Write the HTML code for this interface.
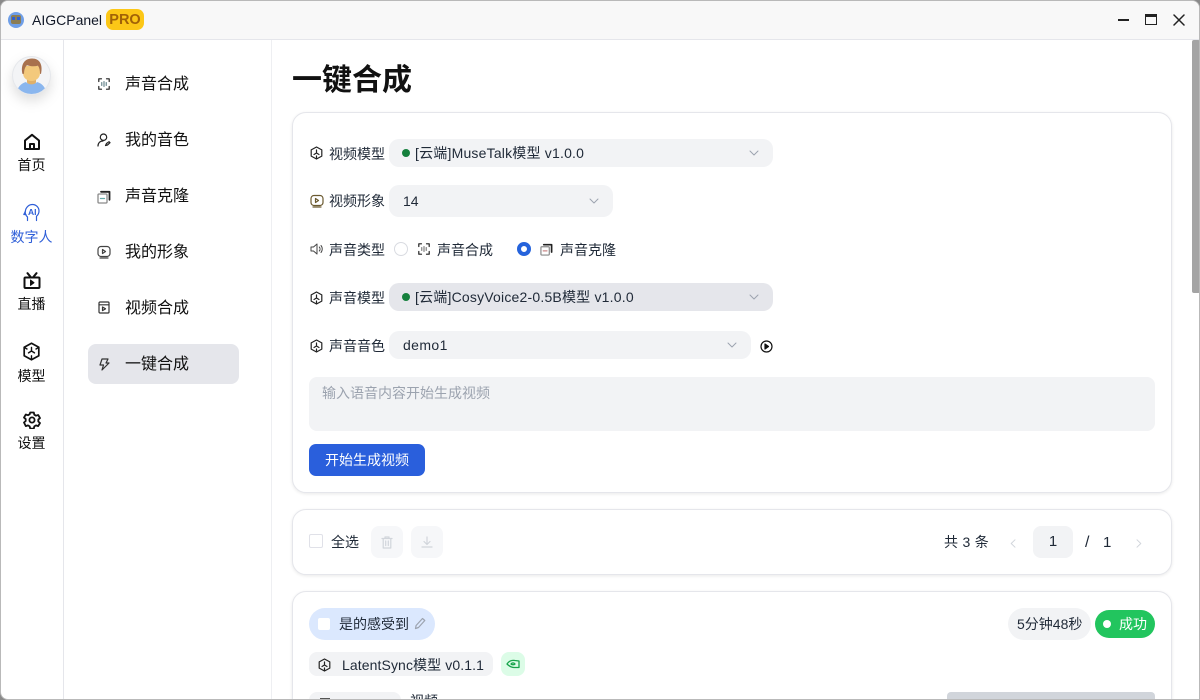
<!DOCTYPE html>
<html lang="zh-CN"><head><meta charset="utf-8"><title>AIGCPanel</title>
<style>
*{box-sizing:border-box;margin:0;padding:0}
html,body{width:1200px;height:700px;overflow:hidden;background:#8a8a8a}
body{font-family:"Liberation Sans","Noto Sans CJK SC",sans-serif;color:#111827}
#win{position:absolute;left:0;top:0;width:1200px;height:700px;background:#fff;border:1px solid #b9b9b9;border-radius:8px 8px 0 8px;overflow:hidden}
#root{position:absolute;left:-1px;top:-1px;width:1200px;height:700px}
.t{position:absolute;white-space:nowrap;line-height:20px}
.box{position:absolute}
svg.i{position:absolute;fill:none;stroke:currentColor;stroke-linecap:round;stroke-linejoin:round}
.sel{position:absolute;background:#f2f3f5;border-radius:10px;height:28px}
.card{position:absolute;left:292px;width:880px;background:#fff;border:1px solid #e5e6eb;border-radius:14px;box-shadow:0 1px 3px rgba(0,0,0,.09)}
.nav{font-size:14px;text-align:center;width:63px;left:0;color:#111}
.sub{font-size:16px;left:125px;color:#111}
.lab{font-size:14px;left:329px;color:#1f2937}
.v{font-size:14px;color:#1f2937}
.dot{position:absolute;width:8px;height:8px;border-radius:50%;background:#15803d}
</style></head><body>
<div id="win"><div id="root">

<!-- title bar -->
<div class="box" style="left:0;top:0;width:1200px;height:40px;background:#f8f8f8;border-bottom:1px solid #e5e6eb"></div>
<div class="box" style="left:8px;top:12px;width:16px;height:16px;border-radius:50%;background:#6f9fe8"></div>
<div class="box" style="left:11px;top:15px;width:10px;height:9px;border-radius:2px;background:#8b7d55"></div>
<div class="box" style="left:12px;top:17px;width:3px;height:3px;background:#2f5fd0"></div>
<div class="box" style="left:17px;top:17px;width:3px;height:3px;background:#2f5fd0"></div>
<div class="t" style="left:32px;top:10px;font-size:14px;width:72px;letter-spacing:0">AIGCPanel</div>
<div class="box" style="left:106px;top:9px;width:38px;height:21px;background:#fcc717;border-radius:7px"></div>
<div class="t" style="left:106px;top:10px;width:38px;text-align:center;font-size:14.500px;font-weight:700;color:#a16207">PRO</div>
<div class="box" style="left:1118px;top:19px;width:11px;height:1.500px;background:#222"></div>
<div class="box" style="left:1145px;top:14px;width:12px;height:11px;border:1.300px solid #222;border-top-width:3px"></div>
<svg class="i" style="left:1173px;top:14px;color:#222" width="12" height="12" viewBox="0 0 12 12" stroke-width="1.500"><path d="M1 1l10 10M11 1L1 11"/></svg>

<!-- left rail -->
<div class="box" style="left:63px;top:40px;width:1px;height:660px;background:#e5e6eb"></div>
<div class="box" style="left:271px;top:40px;width:1px;height:660px;background:#eeeff2"></div>

<!-- avatar -->
<svg style="left:12px;top:56px;filter:drop-shadow(0 6px 6px rgba(0,0,0,.13));position:absolute" width="40" height="40" viewBox="0 0 40 40">
<defs><clipPath id="c"><circle cx="19.500" cy="19.500" r="18.500"/></clipPath></defs>
<circle cx="19.500" cy="19.500" r="19.500" fill="#e5e7eb"/><circle cx="19.500" cy="19.500" r="18.500" fill="#f3f4f6"/>
<g clip-path="url(#c)">
<path d="M5 38c0-7 4-10.500 9-12 2 2.500 9 2.500 11 0 5 1.500 9 5 9 12z" fill="#8ab6ee"/>
<path d="M15 21h9v5.500c-1.500 2.500-7.500 2.500-9 0z" fill="#dfb06a"/>
<path d="M11 10h17v7c0 5-4 8-8.500 8S11 22 11 17z" fill="#f3c97c"/>
<path d="M10.500 18C8.500 10 11.500 2.500 20 2.500c8 0 11 6.500 9 15.500l-1-.3c0-3-.5-6-2-8-4 1-8 .5-11-.5-2 1.500-3 5-3 8.500z" fill="#a8714d"/>
</g></svg>

<!-- rail icons -->
<svg class="i" style="left:23px;top:133px;color:#111" width="18" height="18" viewBox="0 0 18 18" stroke-width="2"><path d="M2 7.500 9 1.800l7 5.700V16H2z"/><path d="M7 16v-5h4v5"/></svg>
<div class="t nav" style="top:155px">首页</div>
<svg class="i" style="left:23px;top:203px;color:#2f5fd8" width="18" height="19" viewBox="0 0 18 19" stroke-width="1.200"><path d="M4.500 17.500V14C2.800 12.500 2 10.500 2.300 8.300 2.800 4.300 5.800 1.500 9.500 1.500c3.700 0 6.500 3 6.500 6.500 0 2.200-1 4-2.500 5.200v4.300"/><path d="M2.300 8.500.8 11.500H3"/></svg>
<div class="t" style="left:28px;top:205px;font-size:8.500px;font-weight:700;color:#2f5fd8;line-height:14px">AI</div>
<div class="t nav" style="top:227px;color:#2f5fd8">数字人</div>
<svg class="i" style="left:23px;top:272px;color:#111" width="18" height="17" viewBox="0 0 18 17" stroke-width="2"><rect x="1.500" y="5.500" width="15" height="10.500" rx="1"/><path d="M4.500 1.200 7.500 4.800M13.500 1.200 10.500 4.800"/><path d="M7.500 8l3.500 2.700-3.500 2.700z" fill="currentColor" stroke-width="1"/></svg>
<div class="t nav" style="top:294px">直播</div>
<svg class="i" style="left:23px;top:342px;color:#111" width="17" height="19" viewBox="0 0 17 19" stroke-width="1.700"><path d="M8.500 1.200 15.800 5.200v8.600l-7.300 4-7.300-4V5.200z"/><path d="M8.500 5.500V9M8.500 9l-3 1.900M8.500 9l3 1.900M8.500 13.800v3.500M1.500 5.500l2.500 1.500M15.500 5.500l-2.500 1.500" stroke-width="1.400"/></svg>
<div class="t nav" style="top:366px">模型</div>
<svg class="i" style="left:23px;top:411px;color:#111" width="18" height="18" viewBox="0 0 18 18" stroke-width="1.800"><path d="M7.200 1.500h3.600l.5 2.200 1.700 1 2.200-.7 1.800 3.100-1.700 1.500v1.900l1.700 1.500-1.800 3.100-2.200-.7-1.700 1-.5 2.200H7.200l-.5-2.200-1.700-1-2.200.7L1 11.500l1.700-1.500V8.100L1 6.600l1.800-3.100 2.200.7 1.700-1z"/><circle cx="9" cy="9" r="2.600"/></svg>
<div class="t nav" style="top:433px">设置</div>

<!-- sub nav -->
<div class="box" style="left:88px;top:344px;width:151px;height:40px;background:#e5e6eb;border-radius:8px"></div>
<svg class="i" style="left:98px;top:78px;color:#222" width="12" height="12" viewBox="0 0 12 12" stroke-width="1.200" stroke-linecap="butt"><path d="M.8 3.500V.8h2.700M8.500.8h2.700v2.700M11.200 8.500v2.700H8.500M3.500 11.200H.8V8.500"/><path d="M3.800 4.500v3M6 3.500v5M8.200 4.500v3" stroke="#4b6f78" stroke-width="1"/></svg>
<div class="t sub" style="top:75px">声音合成</div>
<svg class="i" style="left:97px;top:133px;color:#222" width="14" height="14" viewBox="0 0 14 14" stroke-width="1.200"><circle cx="6.500" cy="4.200" r="3.200"/><path d="M1 13c0-3 2-5 5-5M8.500 12.500 9.500 10.500l2.500-1.800 1 1-2.500 2.300z"/></svg>
<div class="t sub" style="top:131px">我的音色</div>
<svg class="i" style="left:97px;top:190px;color:#333" width="14" height="14" viewBox="0 0 14 14" stroke-width="1.300"><rect x="1" y="4" width="9" height="9" rx="1" stroke="#8a8a8a"/><path d="M4 1.800h8.500v8" stroke-width="1.800" stroke="#222"/><path d="M3.500 8.500h4" stroke="#6aa"/></svg>
<div class="t sub" style="top:187px">声音克隆</div>
<svg class="i" style="left:97px;top:245px;color:#444" width="14" height="14" viewBox="0 0 14 14" stroke-width="1.200"><rect x="1" y="1.500" width="12" height="10" rx="3"/><path d="M3 13h8M5.500 4.500l3 2-3 2z"/></svg>
<div class="t sub" style="top:243px">我的形象</div>
<svg class="i" style="left:98px;top:301px;color:#333" width="12" height="13" viewBox="0 0 12 13" stroke-width="1.200"><rect x="1" y="1" width="10" height="11" rx="1"/><path d="M1 3.800h10M4.500 6l3 1.800-3 1.800z"/></svg>
<div class="t sub" style="top:299px">视频合成</div>
<svg class="i" style="left:98px;top:358px;color:#333" width="12" height="13" viewBox="0 0 12 13" stroke-width="1.200"><path d="M4 1h6L8 5h3L4 12l1.500-5H2z"/></svg>
<div class="t sub" style="top:355px">一键合成</div>

<!-- main -->
<div class="t" style="left:292px;top:62px;font-size:30px;font-weight:700;line-height:38px;color:#111">一键合成</div>

<div class="card" style="top:112px;height:381px"></div>

<svg class="i" style="left:310px;top:146px;color:#222" width="13" height="14" viewBox="0 0 13 14" stroke-width="1.200"><path d="M6.500 1 11.800 3.900v6.200L6.500 13 1.200 10.100V3.900zM6.500 4v3L4 8.500M6.500 7 9 8.500M6.500 10v3"/></svg>
<div class="t lab" style="top:144px">视频模型</div>
<div class="sel" style="left:389px;top:139px;width:384px"></div>
<div class="dot" style="left:402px;top:149px"></div>
<div class="t v" style="left:415px;top:143px;letter-spacing:.2px">[云端]MuseTalk模型 v1.0.0</div>
<svg class="i" style="left:749px;top:150px;color:#9ca3af" width="10" height="6" viewBox="0 0 10 6"><path d="M1 1l4 4 4-4"/></svg>

<svg class="i" style="left:310px;top:194px;color:#6b5a30" width="14" height="14" viewBox="0 0 14 14" stroke-width="1.200"><rect x="1" y="1.500" width="12" height="10" rx="3"/><path d="M3 13h8M5.500 4.500l3 2-3 2z"/></svg>
<div class="t lab" style="top:191px">视频形象</div>
<div class="sel" style="left:389px;top:185px;width:224px;height:32px"></div>
<div class="t v" style="left:403px;top:191px">14</div>
<svg class="i" style="left:589px;top:198px;color:#9ca3af" width="10" height="6" viewBox="0 0 10 6"><path d="M1 1l4 4 4-4"/></svg>

<svg class="i" style="left:310px;top:242px;color:#444" width="14" height="14" viewBox="0 0 14 14" stroke-width="1"><path d="M1 5v4h2.500L7 12V2L3.500 5zM9.300 5a3 3 0 0 1 0 4M11 3.500a5.500 5.500 0 0 1 0 7"/></svg>
<div class="t lab" style="top:240px">声音类型</div>
<div class="box" style="left:394px;top:242px;width:14px;height:14px;border-radius:50%;border:1px solid #d9dbe1;background:#fff"></div>
<svg class="i" style="left:418px;top:243px;color:#222" width="12" height="12" viewBox="0 0 12 12" stroke-width="1.200" stroke-linecap="butt"><path d="M.8 3.500V.8h2.700M8.500.8h2.700v2.700M11.200 8.500v2.700H8.500M3.500 11.200H.8V8.500"/><path d="M3.800 4.500v3M6 3.500v5M8.200 4.500v3" stroke="#666" stroke-width="1"/></svg>
<div class="t" style="left:437px;top:240px;font-size:14px;color:#1f2937">声音合成</div>
<div class="box" style="left:517px;top:242px;width:14px;height:14px;border-radius:50%;border:4px solid #2563dc;background:#fff"></div>
<svg class="i" style="left:540px;top:243px;color:#333" width="13" height="13" viewBox="0 0 14 14" stroke-width="1.300"><rect x="1" y="4" width="9" height="9" rx="1" stroke="#8a8a8a"/><path d="M4 1.800h8.500v8" stroke-width="1.800" stroke="#222"/><path d="M3.500 8.500h4" stroke="#c88"/></svg>
<div class="t" style="left:560px;top:240px;font-size:14px;color:#1f2937">声音克隆</div>

<svg class="i" style="left:310px;top:291px;color:#222" width="13" height="14" viewBox="0 0 13 14" stroke-width="1.200"><path d="M6.500 1 11.800 3.900v6.200L6.500 13 1.200 10.100V3.900zM6.500 4v3L4 8.500M6.500 7 9 8.500M6.500 10v3"/></svg>
<div class="t lab" style="top:288px">声音模型</div>
<div class="sel" style="left:389px;top:283px;width:384px;background:#e5e6eb"></div>
<div class="dot" style="left:402px;top:293px"></div>
<div class="t v" style="left:415px;top:287px;letter-spacing:.2px">[云端]CosyVoice2-0.5B模型 v1.0.0</div>
<svg class="i" style="left:749px;top:294px;color:#9ca3af" width="10" height="6" viewBox="0 0 10 6"><path d="M1 1l4 4 4-4"/></svg>

<svg class="i" style="left:310px;top:339px;color:#222" width="13" height="14" viewBox="0 0 13 14" stroke-width="1.200"><path d="M6.500 1 11.800 3.900v6.200L6.500 13 1.200 10.100V3.900zM6.500 4v3L4 8.500M6.500 7 9 8.500M6.500 10v3"/></svg>
<div class="t lab" style="top:336px">声音音色</div>
<div class="sel" style="left:389px;top:331px;width:362px"></div>
<div class="t v" style="left:403px;top:335px;letter-spacing:.4px">demo1</div>
<svg class="i" style="left:727px;top:342px;color:#9ca3af" width="10" height="6" viewBox="0 0 10 6"><path d="M1 1l4 4 4-4"/></svg>
<svg class="i" style="left:760px;top:340px;color:#111" width="13" height="13" viewBox="0 0 13 13" stroke-width="1.200"><circle cx="6.500" cy="6.500" r="5.500"/><path d="M5 4l3.500 2.500L5 9z" fill="currentColor"/></svg>

<div class="box" style="left:309px;top:377px;width:846px;height:54px;background:#f2f3f5;border-radius:8px"></div>
<div class="t" style="left:322px;top:383px;font-size:14px;color:#9ca3af">输入语音内容开始生成视频</div>
<div class="box" style="left:309px;top:444px;width:116px;height:32px;background:#2a5fdc;border-radius:7px"></div>
<div class="t" style="left:309px;top:450px;width:116px;text-align:center;font-size:14px;color:#fff">开始生成视频</div>

<!-- toolbar -->
<div class="card" style="top:509px;height:66px"></div>
<div class="box" style="left:309px;top:534px;width:14px;height:14px;border:1.500px solid #e0e1e8;border-radius:2px;background:#fff"></div>
<div class="t" style="left:331px;top:532px;font-size:14px;color:#1f2937">全选</div>
<div class="box" style="left:371px;top:526px;width:32px;height:32px;background:#f6f7f9;border-radius:8px"></div>
<svg class="i" style="left:381px;top:536px;color:#d1d5db" width="12" height="13" viewBox="0 0 12 13" stroke-width="1.200"><path d="M1 2.500h10M4 2.500V1h4v1.500M2.200 2.500V12h7.600V2.500M4.700 5v4.500M7.300 5v4.500"/></svg>
<div class="box" style="left:411px;top:526px;width:32px;height:32px;background:#f6f7f9;border-radius:8px"></div>
<svg class="i" style="left:421px;top:536px;color:#d1d5db" width="12" height="12" viewBox="0 0 12 12" stroke-width="1.200"><path d="M6 1v7M3 5.500 6 8.500l3-3M1 11h10"/></svg>
<div class="t" style="left:944px;top:532px;font-size:14px;color:#1f2937;letter-spacing:.3px">共 3 条</div>
<svg class="i" style="left:1010px;top:539px;color:#d1d5db" width="6" height="9" viewBox="0 0 6 9"><path d="M5 .8 1.200 4.500 5 8.200"/></svg>
<div class="box" style="left:1033px;top:526px;width:40px;height:32px;background:#f2f3f5;border-radius:8px"></div>
<div class="t" style="left:1033px;top:532px;width:40px;text-align:center;font-size:15px;color:#1f2937">1</div>
<div class="t" style="left:1085px;top:533px;font-size:16px;color:#1f2937">/</div>
<div class="t" style="left:1103px;top:533px;font-size:15px;color:#1f2937">1</div>
<svg class="i" style="left:1136px;top:539px;color:#d1d5db" width="6" height="9" viewBox="0 0 6 9"><path d="M1 .8l3.800 3.700L1 8.200"/></svg>

<!-- task card -->
<div class="card" style="top:591px;height:140px"></div>
<div class="box" style="left:309px;top:608px;width:126px;height:32px;background:#dbe8fe;border-radius:16px"></div>
<div class="box" style="left:318px;top:618px;width:12px;height:12px;background:#fff;border-radius:2px"></div>
<div class="t" style="left:339px;top:614px;font-size:14px;color:#1f2937">是的感受到</div>
<svg class="i" style="left:414px;top:617px;color:#9ca3af" width="12" height="13" viewBox="0 0 12 13" stroke-width="1.200"><path d="M1.500 11.500l.6-3L8.500 1.500l2.300 2-6.300 7z"/></svg>
<div class="box" style="left:1008px;top:608px;width:83px;height:32px;background:#f2f3f5;border-radius:16px"></div>
<div class="t" style="left:1017px;top:614px;font-size:14px;color:#1f2937">5分钟48秒</div>
<div class="box" style="left:1095px;top:610px;width:60px;height:28px;background:#22c55e;border-radius:14px"></div>
<div class="box" style="left:1103px;top:620px;width:8px;height:8px;background:#fff;border-radius:50%"></div>
<div class="t" style="left:1119px;top:614px;font-size:14px;color:#fff">成功</div>

<div class="box" style="left:309px;top:652px;width:184px;height:24px;background:#f2f3f5;border-radius:8px"></div>
<svg class="i" style="left:318px;top:658px;color:#222" width="13" height="14" viewBox="0 0 13 14" stroke-width="1.200"><path d="M6.500 1 11.800 3.900v6.200L6.500 13 1.200 10.100V3.900zM6.500 4v3L4 8.500M6.500 7 9 8.500M6.500 10v3"/></svg>
<div class="t" style="left:342px;top:655px;font-size:14px;color:#1f2937;letter-spacing:.1px">LatentSync模型 v0.1.1</div>
<div class="box" style="left:501px;top:652px;width:24px;height:24px;background:#dcfce7;border-radius:8px"></div>
<svg class="i" style="left:506px;top:659px;color:#16a34a" width="14" height="10" viewBox="0 0 14 10" stroke-width="1.300"><path d="M1 5c2-3 5-4 8-3.500L13 2v6.500H8C5 8.500 3 7 1 5zM5 5c1-1.500 3-1.500 4 0-1 1-3 1-4 0z"/></svg>

<div class="box" style="left:309px;top:692px;width:92px;height:24px;background:#f2f3f5;border-radius:8px"></div>
<div class="box" style="left:320px;top:698px;width:10px;height:2px;background:#555"></div>
<div class="t" style="left:410px;top:691px;font-size:14px;color:#1f2937">视频</div>
<div class="box" style="left:947px;top:692px;width:208px;height:30px;background:#d1d5db;border-radius:4px"></div>

<!-- scrollbar -->
<div class="box" style="left:1192px;top:40px;width:8px;height:253px;background:#a4a4a4;border-radius:2px"></div>
</div></div>
</body></html>
